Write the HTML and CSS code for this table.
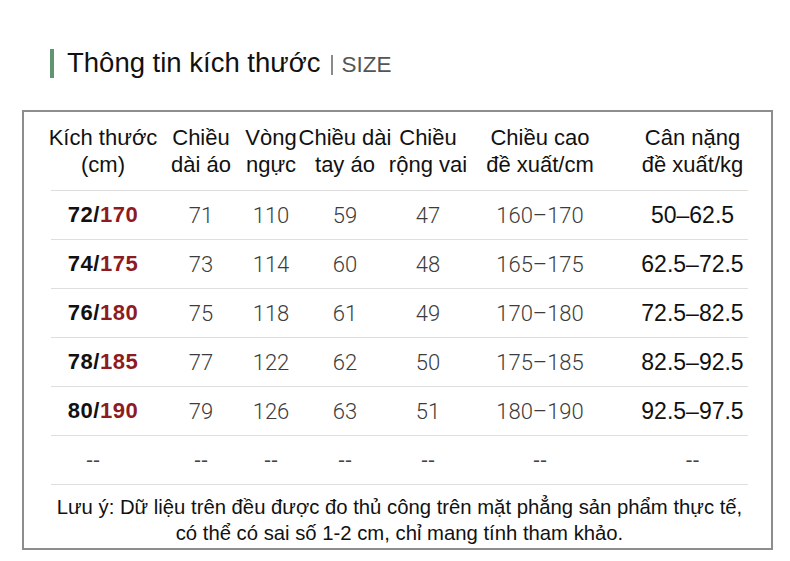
FILE: index.html
```html
<!DOCTYPE html>
<html lang="vi">
<head>
<meta charset="utf-8">
<title>Thông tin kích thước</title>
<link rel="stylesheet" href="styles.css">
</head>
<body>
<div class="page">
  <div class="title">
    <span class="title-bar"></span>
    <h1 class="title-text">Thông tin kích thước<span class="title-sep"></span><span class="title-en">SIZE</span></h1>
  </div>
  <div class="box">
    <div class="row row-head">
      <div class="cell">Kích thước<br>(cm)</div>
      <div class="cell">Chiều<br>dài áo</div>
      <div class="cell">Vòng<br>ngực</div>
      <div class="cell">Chiều dài<br>tay áo</div>
      <div class="cell">Chiều<br>rộng vai</div>
      <div class="cell">Chiều cao<br>đề xuất/cm</div>
      <div class="cell cell-kg">Cân nặng<br>đề xuất/kg</div>
    </div>
    <div class="row">
      <div class="cell size"><span class="size-a">72/</span><span class="size-b">170</span></div>
      <div class="cell">71</div><div class="cell">110</div><div class="cell">59</div><div class="cell">47</div>
      <div class="cell">160–170</div><div class="cell cell-kg weight">50–62.5</div>
    </div>
    <div class="row">
      <div class="cell size"><span class="size-a">74/</span><span class="size-b">175</span></div>
      <div class="cell">73</div><div class="cell">114</div><div class="cell">60</div><div class="cell">48</div>
      <div class="cell">165–175</div><div class="cell cell-kg weight">62.5–72.5</div>
    </div>
    <div class="row">
      <div class="cell size"><span class="size-a">76/</span><span class="size-b">180</span></div>
      <div class="cell">75</div><div class="cell">118</div><div class="cell">61</div><div class="cell">49</div>
      <div class="cell">170–180</div><div class="cell cell-kg weight">72.5–82.5</div>
    </div>
    <div class="row">
      <div class="cell size"><span class="size-a">78/</span><span class="size-b">185</span></div>
      <div class="cell">77</div><div class="cell">122</div><div class="cell">62</div><div class="cell">50</div>
      <div class="cell">175–185</div><div class="cell cell-kg weight">82.5–92.5</div>
    </div>
    <div class="row">
      <div class="cell size"><span class="size-a">80/</span><span class="size-b">190</span></div>
      <div class="cell">79</div><div class="cell">126</div><div class="cell">63</div><div class="cell">51</div>
      <div class="cell">180–190</div><div class="cell cell-kg weight">92.5–97.5</div>
    </div>
    <div class="row row-dash">
      <div class="cell cell-dash1">--</div><div class="cell">--</div><div class="cell">--</div><div class="cell">--</div>
      <div class="cell">--</div><div class="cell">--</div><div class="cell cell-kg">--</div>
    </div>
    <p class="note">Lưu ý: Dữ liệu trên đều được đo thủ công trên mặt phẳng sản phẩm thực tế,<br>có thể có sai số 1-2 cm, chỉ mang tính tham khảo.</p>
  </div>
</div>
</body>
</html>
```
FILE: styles.css
```css
* { box-sizing: border-box; }
html, body {
  margin: 0;
  padding: 0;
  background: #fff;
}
body {
  font-family: "Liberation Sans", Arial, sans-serif;
  color: #111;
}
.page {
  padding: 49px 0 0 22px;
}
.title {
  display: flex;
  align-items: center;
  height: 29px;
  padding-left: 28px;
}
.title-bar {
  width: 4px;
  height: 29px;
  background: #5f9571;
}
.title-text {
  margin: 0 0 0 13px;
  font-size: 27.5px;
  font-weight: normal;
  line-height: 29px;
  color: #111;
  display: flex;
  align-items: baseline;
}
.title-sep {
  display: inline-block;
  width: 2px;
  height: 20px;
  background: #8a8a8a;
  margin: 0 9px 0 10px;
  align-self: center;
  position: relative;
  top: 1px;
}
.title-en {
  font-size: 22.5px;
  color: #555;
}
.box {
  margin-top: 32px;
  width: 751px;
  height: 440px;
  border: 2px solid #8d8d8d;
  padding: 0 23px 0 27px;
}
.row {
  display: grid;
  grid-template-columns: 104px 92px 48px 100px 66px 158px 129px;
  height: 49px;
  border-bottom: 1px solid #dedede;
  font-family: Roboto, "Liberation Sans", sans-serif;
  font-weight: 300;
  font-size: 22px;
  color: #3c3c3c;
}
.row-head {
  height: 79px;
  font-family: "Liberation Sans", Arial, sans-serif;
  font-weight: normal;
  font-size: 22px;
  line-height: 27px;
  color: #111;
}
.row-dash {
  font-family: "Liberation Sans", Arial, sans-serif;
  font-weight: normal;
  font-size: 21px;
  color: #444;
}
.cell {
  display: flex;
  align-items: center;
  justify-content: center;
  text-align: center;
  white-space: nowrap;
}
.cell-kg {
  padding-left: 18px;
}
.size {
  font-family: "Liberation Sans", Arial, sans-serif;
  font-weight: bold;
  font-size: 22px;
  letter-spacing: 0.5px;
}
.size-a { color: #111; }
.size-b { color: #8e1b22; }
.weight {
  font-family: "Liberation Sans", Arial, sans-serif;
  font-weight: normal;
  color: #111;
  font-size: 23px;
}
.row-dash .cell-dash1 {
  padding-right: 20px;
}
.note {
  margin: 9px 0 0;
  font-size: 20.3px;
  line-height: 26px;
  text-align: center;
  color: #111;
}
```
